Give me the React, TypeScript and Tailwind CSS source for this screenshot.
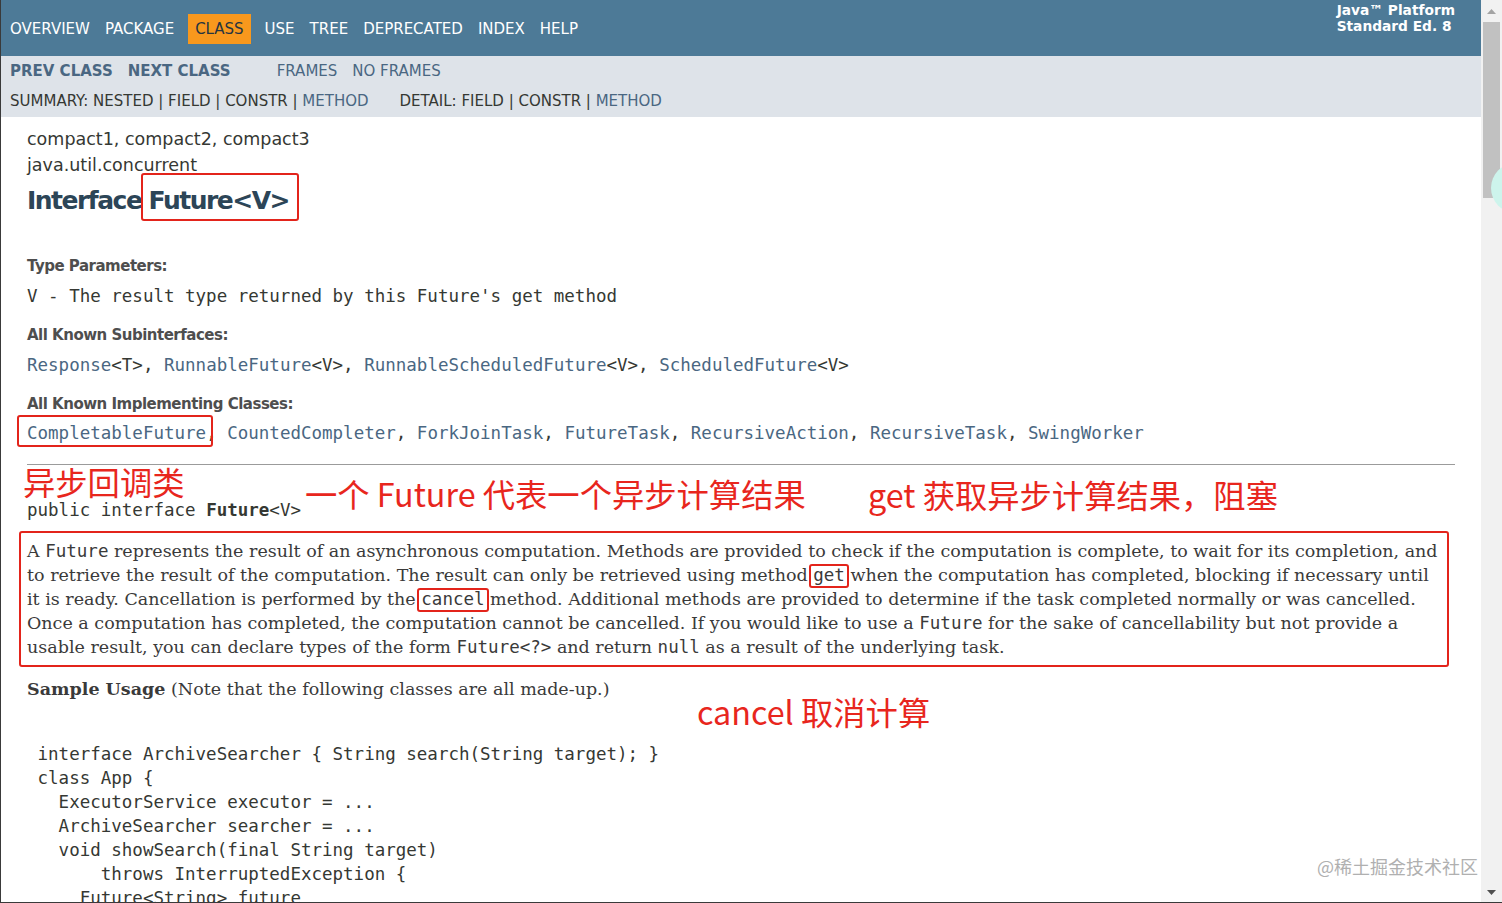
import type { ReactNode } from "react";

const sans = "font-['DejaVu_Sans',Arial,sans-serif]";
const mono = "font-['DejaVu_Sans_Mono',monospace]";
const serif = "font-['DejaVu_Serif',Georgia,serif]";
const cjk = "font-['Noto_Sans_CJK_SC',sans-serif]";

// red annotation box drawn over a word
function Mark({ children, box }: { children: ReactNode; box: string }) {
  return (
    <span className="relative">
      {children}
      <span className={`pointer-events-none absolute rounded-[3px] border-[2.5px] border-[#e3241b] ${box}`} />
    </span>
  );
}

function Note({ children, pos }: { children: ReactNode; pos: string }) {
  return (
    <div className={`absolute whitespace-nowrap text-[32.3px] leading-none text-[#e8261d] ${cjk} ${pos}`}>{children}</div>
  );
}

const topNav = ["Overview", "Package", "Class", "Use", "Tree", "Deprecated", "Index", "Help"];

function Code({ children, bold }: { children: ReactNode; bold?: boolean }) {
  return <span className={`${mono} text-[17.5px] ${bold ? "font-bold" : ""}`}>{children}</span>;
}

function Link({ children }: { children: ReactNode }) {
  return <span className="text-[#4a6782]">{children}</span>;
}

export default function App() {
  return (
    <div className={`relative flex h-[903px] w-[1502px] overflow-hidden border-b border-l border-[#3a3a3a] bg-white text-[#353833] ${sans}`}>
      <main className="w-[1480px] shrink-0">
        {/* top nav */}
        <header className="flex h-[56px] items-start bg-[#4d7a97] text-white">
          <ul className="flex pl-[1.5px] pt-[15px] text-[15px] leading-[17px]">
            {topNav.map((n) =>
              n === "Class" ? (
                <li key={n} className="-mt-[1px] mx-[6px] bg-[#f8981d] px-[7.5px] pb-[6px] pt-[7px] uppercase text-[#253441]">
                  {n}
                </li>
              ) : (
                <li key={n} className="px-[7.5px] py-[6px] uppercase">
                  {n}
                </li>
              )
            )}
          </ul>
          <div className="ml-auto mr-[26px] mt-[2px] text-[13.75px] font-bold leading-[16px]">
            Java™ Platform
            <br />
            Standard Ed. 8
          </div>
        </header>

        {/* sub nav */}
        <div className="h-[61px] bg-[#dee3e9] pt-[5px] text-[15px] leading-[20px]">
          <div className="flex pl-[1.5px]">
            <ul className="mr-[31px] flex font-bold text-[#4a6782]">
              <li className="px-[7.5px]">PREV CLASS</li>
              <li className="px-[7.5px]">NEXT CLASS</li>
            </ul>
            <ul className="flex text-[#4a6782]">
              <li className="px-[7.5px]">FRAMES</li>
              <li className="px-[7.5px]">NO FRAMES</li>
            </ul>
          </div>
          <div className="mt-[10px] flex pl-[9px]">
            <div className="mr-[31px]">
              SUMMARY: NESTED | FIELD | CONSTR | <Link>METHOD</Link>
            </div>
            <div>
              DETAIL: FIELD | CONSTR | <Link>METHOD</Link>
            </div>
          </div>
        </div>

        {/* content */}
        <div className="px-[26px] pt-[9px]">
          <div className="text-[17.5px] leading-[26px]">compact1, compact2, compact3</div>
          <div className="text-[17.5px] leading-[26px]">java.util.concurrent</div>
          <h2 className="mt-[8px] text-[25px] font-bold leading-[30px] tracking-[-1.5px] text-[#2c4557]">
            Interface{" "}
            <Mark box="-left-[8px] -right-[10px] -top-[13px] -bottom-[6px]">Future&lt;V&gt;</Mark>
          </h2>

          <dl>
            <dt className="mt-[40px] text-[15px] font-bold leading-[20px] tracking-[-0.5px] text-[#4e4e4e]">Type Parameters:</dt>
            <dd className={`mt-[8px] text-[17.5px] leading-[24px] ${mono}`}>V - The result type returned by this Future's get method</dd>
            <dt className="mt-[17px] text-[15px] font-bold leading-[20px] tracking-[-0.5px] text-[#4e4e4e]">All Known Subinterfaces:</dt>
            <dd className={`mt-[8px] text-[17.5px] leading-[24px] ${mono}`}>
              <Link>Response</Link>&lt;T&gt;, <Link>RunnableFuture</Link>&lt;V&gt;, <Link>RunnableScheduledFuture</Link>&lt;V&gt;,{" "}
              <Link>ScheduledFuture</Link>&lt;V&gt;
            </dd>
            <dt className="mt-[17px] text-[15px] font-bold leading-[20px] tracking-[-0.5px] text-[#4e4e4e]">All Known Implementing Classes:</dt>
            <dd className={`mt-[7px] text-[17.5px] leading-[24px] ${mono}`}>
              <Mark box="-left-[10px] -right-[7px] -top-[8px] -bottom-[4px]">
                <Link>CompletableFuture</Link>
              </Mark>
              , <Link>CountedCompleter</Link>, <Link>ForkJoinTask</Link>, <Link>FutureTask</Link>, <Link>RecursiveAction</Link>,{" "}
              <Link>RecursiveTask</Link>, <Link>SwingWorker</Link>
            </dd>
          </dl>

          <hr className="mt-[19px] border-0 border-t border-[#9b9b9b]" />

          <pre className={`mt-[33px] text-[17.5px] leading-[24px] ${mono}`}>
            public interface <b>Future</b>&lt;V&gt;
          </pre>

          <div className="relative mt-[17px]">
            <p className={`whitespace-nowrap text-[17.5px] leading-[24px] text-[#3a3a3a] ${serif}`}>
              A <Code>Future</Code> represents the result of an asynchronous computation. Methods are provided to check if the computation is complete, to wait for its completion, and
              <br />
              to retrieve the result of the computation. The result can only be retrieved using method{" "}
              <Mark box="-left-[4px] -right-[4px] -top-[1px] -bottom-[3px]">
                <Code>get</Code>
              </Mark>{" "}
              when the computation has completed, blocking if necessary until
              <br />
              it is ready. Cancellation is performed by the{" "}
              <Mark box="-left-[4px] -right-[4px] -top-[1px] -bottom-[3px]">
                <Code>cancel</Code>
              </Mark>{" "}
              method. Additional methods are provided to determine if the task completed normally or was cancelled.
              <br />
              Once a computation has completed, the computation cannot be cancelled. If you would like to use a <Code>Future</Code> for the sake of cancellability but not provide a
              <br />
              usable result, you can declare types of the form <Code>Future&lt;?&gt;</Code> and return <Code>null</Code> as a result of the underlying task.
            </p>
            <div className="pointer-events-none absolute -bottom-[8px] -left-[8px] -top-[8px] right-[6px] rounded-[3px] border-[2.5px] border-[#e3241b]" />
          </div>

          <p className={`mt-[18px] text-[17.5px] leading-[24px] text-[#3a3a3a] ${serif}`}>
            <b>Sample Usage</b> (Note that the following classes are all made-up.)
          </p>

          <pre className={`mt-[41px] text-[17.5px] leading-[24px] ${mono}`}>
            {` interface ArchiveSearcher { String search(String target); }
 class App {
   ExecutorService executor = ...
   ArchiveSearcher searcher = ...
   void showSearch(final String target)
       throws InterruptedException {
     Future<String> future
       = executor.submit(new Callable<String>() {`}
          </pre>
        </div>
      </main>

      {/* scrollbar */}
      <div className="flex w-[21px] flex-col bg-[#f1f1f1]">
        <div className="flex h-[22px] items-center justify-center">
          <svg width="9" height="5" viewBox="0 0 9 5">
            <path d="M0 5 L4.5 0 L9 5 Z" fill="#a3a3a3" />
          </svg>
        </div>
        <div className="mx-[2px] h-[176px] bg-[#c1c1c1]" />
        <div className="flex-1" />
        <div className="flex h-[20px] items-center justify-center">
          <svg width="9" height="5" viewBox="0 0 9 5">
            <path d="M0 0 L9 0 L4.5 5 Z" fill="#505050" />
          </svg>
        </div>
      </div>

      {/* overlays: hand-written notes, floating bubble, watermark */}
      <Note pos="left-[22px] top-[465px]">异步回调类</Note>
      <Note pos="left-[304px] top-[477px]">一个 Future 代表一个异步计算结果</Note>
      <Note pos="left-[867px] top-[478px]">get 获取异步计算结果，阻塞</Note>
      <Note pos="left-[696px] top-[695px]">cancel 取消计算</Note>
      <div className="absolute left-[1490px] top-[163px] h-[50px] w-[50px] rounded-full bg-[#cdf4ec]" />
      <div className={`absolute left-[1316px] top-[857px] whitespace-nowrap text-[18px] leading-none text-[#b0b0b0] ${cjk}`}>@稀土掘金技术社区</div>
    </div>
  );
}
